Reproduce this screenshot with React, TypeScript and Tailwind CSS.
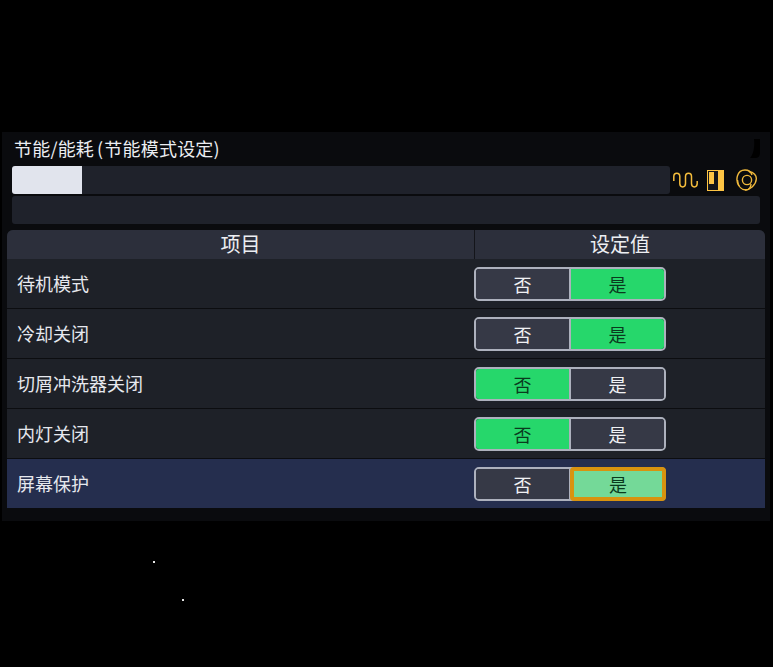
import React from 'react';

const ROWS = [
  { label: '待机模式', value: true },
  { label: '冷却关闭', value: true },
  { label: '切屑冲洗器关闭', value: false },
  { label: '内灯关闭', value: false },
  { label: '屏幕保护', value: true, focused: true },
];

const Toggle: React.FC<{ value: boolean; focused?: boolean }> = ({ value, focused }) => {
  const on = 'bg-[#26d76b] text-[#0b3a1e]';
  const off = 'bg-[#363946] text-[#f0f1f4]';
  return (
    <div className="relative flex h-[34px] w-[192px] rounded-[5px] border-2 border-[#adb1bd] text-[18px] leading-[30px]">
      <div className={`flex w-[95px] items-center justify-center rounded-l-[3px] border-r-2 border-[#adb1bd] ${value ? off : on}`}>否</div>
      <div className={`flex flex-1 items-center justify-center rounded-r-[3px] ${value ? on : off}`}>是</div>
      {focused && (
        <div className="absolute top-[-2px] right-[-2px] bottom-[-2px] left-[94px] flex items-center justify-center rounded-[4px] border-4 border-[#d8930f] bg-[#74d998] text-[#0b3a1e]">是</div>
      )}
    </div>
  );
};

const App: React.FC = () => {
  return (
    <div className="relative h-[667px] w-[773px] overflow-hidden bg-black pt-[132px] pl-[2px] font-['Noto_Sans_CJK_SC','Noto_Sans',sans-serif]">
      <div className="relative h-[389px] w-[768px] bg-[#0a0b0e]">
        <div className="pt-[4px] pl-[12px] text-[18px] leading-[25px] tracking-[0.2px] text-[#eceef2]">
          节能/能耗<span className="mr-[1px] ml-[3px]">(</span>节能模式设定)
        </div>
        <svg className="absolute top-[7px] right-[10px]" width="10" height="19" viewBox="0 0 10 19">
          <path d="M4 0H10V14Q10 19 5 19H0C3 16 5 9 4 0Z" fill="#000" />
        </svg>

        <div className="mt-[5px] flex items-center pl-[10px]">
          <div className="h-[28px] w-[658px] overflow-hidden rounded-[3px] bg-[#1f222b]">
            <div className="h-full w-[70px] bg-[#e1e4ed]" />
          </div>
          <svg className="ml-[3px]" width="25" height="16" viewBox="0 0 25 16" fill="none" stroke="#f5bd3c" strokeWidth="1.5">
            <path d="M.8 9V4.5c0-4.5 6-4.5 6 0v7c0 4.5 5.7 4.5 5.7 0v-7c0-4.5 6-4.5 6 0v7c0 4.5 5.7 4.5 5.7 0V9" />
          </svg>
          <svg className="ml-[9px]" width="17" height="21" viewBox="0 0 17 21">
            <rect width="17" height="21" fill="#fdc444" />
            <rect x="1" y="1" width="10" height="19" fill="#14151a" />
            <rect x="2" y="2" width="5" height="12" fill="#fdc444" />
          </svg>
          <svg className="ml-[12px]" width="21" height="22" viewBox="0 0 21 22" fill="none" stroke="#f0b93c" strokeWidth="1.4">
            <path d="M3 17C-1 11 1 1 9 1 12 1 15 3 16 6" />
            <path d="M13 2.5C18 3 20.5 7 20.3 10 20 16 14 21 9 21" />
            <path d="M1.5 11C2 18 6 21 10 21 13 21 15 18 15 15" />
            <circle cx="11" cy="11" r="4.6" />
          </svg>
        </div>

        <div className="mt-[2px] ml-[10px] h-[28px] w-[748px] rounded-[3px] bg-[#1f222b]" />

        <div className="mt-[6px] ml-[5px] w-[758px] overflow-hidden rounded-t-[6px] bg-[#1e2128]">
          <div className="flex h-[29px] bg-[#2c2f3b] text-[20px] leading-[28px] text-[#eceef2]">
            <div className="w-[468px] border-r border-[#14151a] text-center">项目</div>
            <div className="flex-1 text-center">设定值</div>
          </div>
          {ROWS.map((row) => (
            <div key={row.label} className={`flex h-[50px] items-center border-b border-[#0c0d10] last:h-[49px] last:border-b-0 ${row.focused ? 'bg-[#252e4e]' : ''}`}>
              <div className="w-[467px] pl-[10px] text-[18px] text-[#e6e8ee]">{row.label}</div>
              <Toggle value={row.value} focused={row.focused} />
            </div>
          ))}
        </div>
      </div>
      <div className="absolute top-[561px] left-[153px] h-[2px] w-[2px] bg-[#e5e5e5]" />
      <div className="absolute top-[599px] left-[182px] h-[2px] w-[2px] bg-[#e5e5e5]" />
    </div>
  );
};

export default App;
